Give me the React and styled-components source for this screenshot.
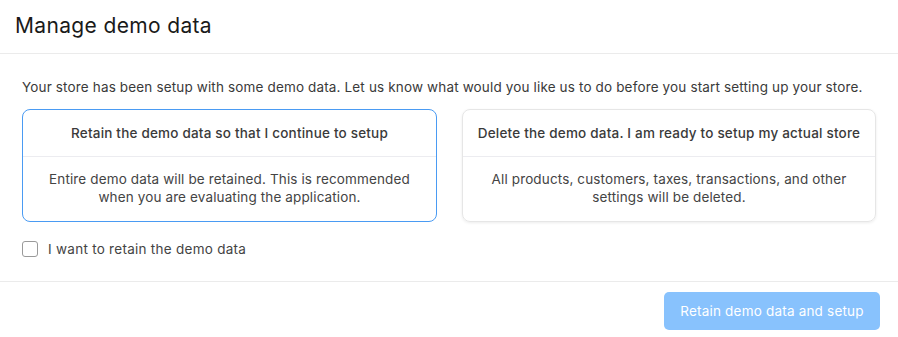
import React from "react";
import styled, { createGlobalStyle } from "styled-components";

const Global = createGlobalStyle`
  html, body { margin: 0; padding: 0; background: #fff; }
  body { font-family: "Inter", "Open Sans", sans-serif; color: #333; }
  * { box-sizing: border-box; }
`;

const Modal = styled.div`
  width: 898px;
  height: 337px;
  display: flex;
  flex-direction: column;
  background: #fff;
`;

const Header = styled.div`
  height: 54px;
  padding: 0 15px 2px;
  display: flex;
  align-items: center;
  border-bottom: 1px solid #ebebeb;
`;

const Title = styled.h1`
  margin: 0;
  font-size: 21px;
  font-weight: 400;
  color: #1a1a1a;
  letter-spacing: 0.35px;
`;

const Body = styled.div`
  padding: 24px 22px 0 22px;
  height: 228px;
  border-bottom: 1px solid #ebebeb;
`;

const Intro = styled.p`
  margin: 0 0 13px 0;
  font-size: 13.5px;
  line-height: 18px;
  color: #3a3a3a;
  letter-spacing: 0.15px;
`;

const Cards = styled.div`
  display: grid;
  grid-template-columns: 415px 414px;
  gap: 25px;
`;

const Card = styled.div`
  height: 113px;
  border-radius: 8px;
  border: 1px solid ${(p) => (p.$selected ? "#4a9bf3" : "#e6e6e6")};
  box-shadow: ${(p) => (p.$selected ? "none" : "0 1px 3px rgba(0,0,0,0.08)")};
  display: flex;
  flex-direction: column;
  text-align: center;
`;

const CardHead = styled.div`
  height: 47px;
  display: flex;
  align-items: center;
  justify-content: center;
  font-size: 13.5px;
  letter-spacing: 0.2px;
  color: #3a3a3a;
  font-weight: 500;
  border-bottom: 1px solid #ececf0;
`;

const CardText = styled.div`
  flex: 1;
  display: flex;
  align-items: center;
  justify-content: center;
  padding: 0 18px 2px;
  font-size: 13.5px;
  letter-spacing: 0.13px;
  line-height: 18px;
  color: #444;
`;

const CheckRow = styled.label`
  margin-top: 19px;
  display: flex;
  align-items: center;
  gap: 10px;
  font-size: 13.5px;
  letter-spacing: 0.27px;
  color: #444;
`;

const Box = styled.span`
  width: 16px;
  height: 16px;
  border: 1px solid #9a9a9a;
  border-radius: 3px;
  background: #fff;
`;

const Footer = styled.div`
  flex: 1;
  display: flex;
  align-items: flex-start;
  justify-content: flex-end;
  padding: 10px 18px 0 0;
`;

const Button = styled.button`
  width: 216px;
  height: 38px;
  border: none;
  border-radius: 5px;
  background: #88c2fd;
  color: #fff;
  font-family: inherit;
  font-size: 13.5px;
  letter-spacing: 0.2px;
`;

export default function App() {
  return (
    <>
      <Global />
      <Modal>
        <Header>
          <Title>Manage demo data</Title>
        </Header>
        <Body>
          <Intro>
            Your store has been setup with some demo data. Let us know what would you like us to do before you start setting up your store.
          </Intro>
          <Cards>
            <Card $selected>
              <CardHead>Retain the demo data so that I continue to setup</CardHead>
              <CardText>Entire demo data will be retained. This is recommended when you are evaluating the application.</CardText>
            </Card>
            <Card>
              <CardHead>Delete the demo data. I am ready to setup my actual store</CardHead>
              <CardText>All products, customers, taxes, transactions, and other settings will be deleted.</CardText>
            </Card>
          </Cards>
          <CheckRow>
            <Box />
            I want to retain the demo data
          </CheckRow>
        </Body>
        <Footer>
          <Button disabled>Retain demo data and setup</Button>
        </Footer>
      </Modal>
    </>
  );
}
